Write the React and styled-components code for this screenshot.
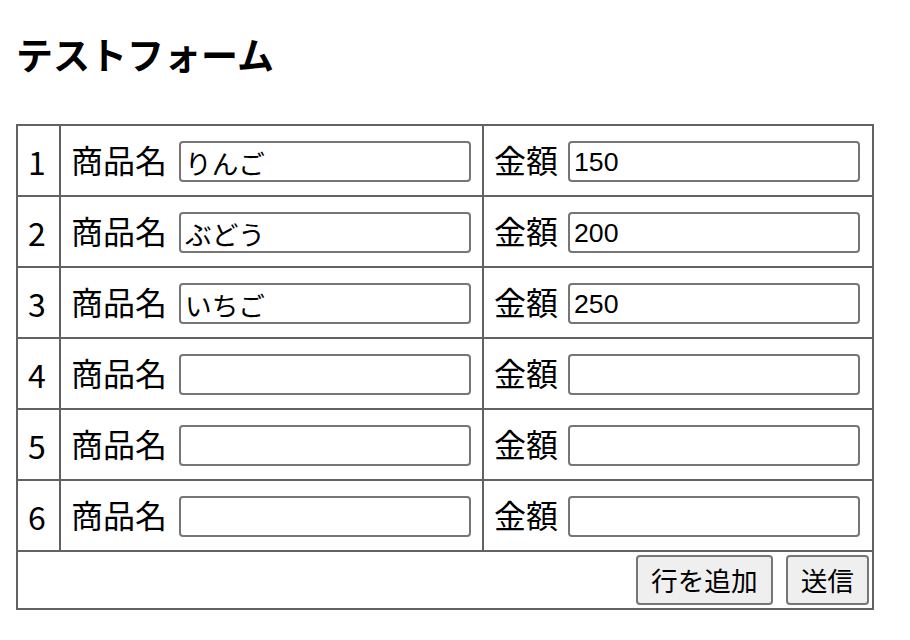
import React, { useState } from "react";
import styled, { createGlobalStyle } from "styled-components";

const GlobalStyle = createGlobalStyle`
  html, body { margin: 0; padding: 0; background: #ffffff; }
  body { font-family: "Noto Sans CJK JP", sans-serif; color: #000; }
`;

const Page = styled.div`
  padding: 0 16px;
`;

const Title = styled.h3`
  margin: 36px 0 51px;
  font-size: 37px;
  line-height: 37px;
  font-weight: 700;
  font-family: "Noto Sans CJK JP", sans-serif;
`;

const LINE = "#626262";

const FormGrid = styled.form`
  display: grid;
  grid-template-columns: 41px 421px 388px;
  grid-template-rows: ${({ $rows }) => `repeat(${$rows}, 69px) 56px`};
  gap: 2px;
  padding: 2px;
  background: ${LINE};
  width: max-content;
  margin: 0;
`;

const Cell = styled.div`
  background: #fff;
  display: flex;
  align-items: center;
  padding: 0 10px;
  gap: ${({ $gap = 12 }) => `${$gap}px`};
  font-size: 32px;
  font-family: "Noto Sans CJK JP", sans-serif;
  line-height: 1;
  white-space: nowrap;
  min-width: 0;
`;

const IndexCell = styled(Cell)`
  padding: 0 0 0 10px;
`;

const FooterCell = styled.div`
  grid-column: 1 / -1;
  background: #fff;
  display: flex;
  justify-content: flex-end;
  align-items: center;
  gap: 13px;
  padding: 0 3px;
`;

const Label = styled.span`
  display: inline-block;
  margin-top: -3px;
`;

const TextInput = styled.input`
  box-sizing: border-box;
  width: 292px;
  height: 41px;
  margin: 2px 0 0;
  padding: 3px 4px 1px;
  border: 2px solid #767676;
  border-radius: 4px;
  font-size: 26.67px;
  font-family: "Liberation Sans", "Noto Sans CJK JP", sans-serif;
  color: #000;
  background: #fff;
  outline: none;
`;

const Button = styled.button`
  box-sizing: border-box;
  height: 50px;
  padding: 0 13px;
  border: 2px solid #767676;
  border-radius: 4px;
  background: #efefef;
  color: #000;
  font-size: 26.67px;
  font-family: "Noto Sans CJK JP", sans-serif;
  line-height: 1;
  cursor: pointer;
`;

const initialRows = [
  { name: "りんご", price: "150" },
  { name: "ぶどう", price: "200" },
  { name: "いちご", price: "250" },
  { name: "", price: "" },
  { name: "", price: "" },
  { name: "", price: "" },
];

export default function App() {
  const [rows, setRows] = useState(initialRows);

  const update = (i, key, value) =>
    setRows((prev) => prev.map((r, j) => (j === i ? { ...r, [key]: value } : r)));

  return (
    <Page>
      <GlobalStyle />
      <Title>テストフォーム</Title>
      <FormGrid $rows={rows.length} onSubmit={(e) => e.preventDefault()}>
        {rows.map((row, i) => (
          <React.Fragment key={i}>
            <IndexCell>{i + 1}</IndexCell>
            <Cell>
              <Label>商品名</Label>
              <TextInput
                value={row.name}
                onChange={(e) => update(i, "name", e.target.value)}
              />
            </Cell>
            <Cell $gap={10}>
              <Label>金額</Label>
              <TextInput
                value={row.price}
                onChange={(e) => update(i, "price", e.target.value)}
              />
            </Cell>
          </React.Fragment>
        ))}
        <FooterCell>
          <Button
            type="button"
            onClick={() => setRows((p) => [...p, { name: "", price: "" }])}
          >
            行を追加
          </Button>
          <Button type="submit">送信</Button>
        </FooterCell>
      </FormGrid>
    </Page>
  );
}
